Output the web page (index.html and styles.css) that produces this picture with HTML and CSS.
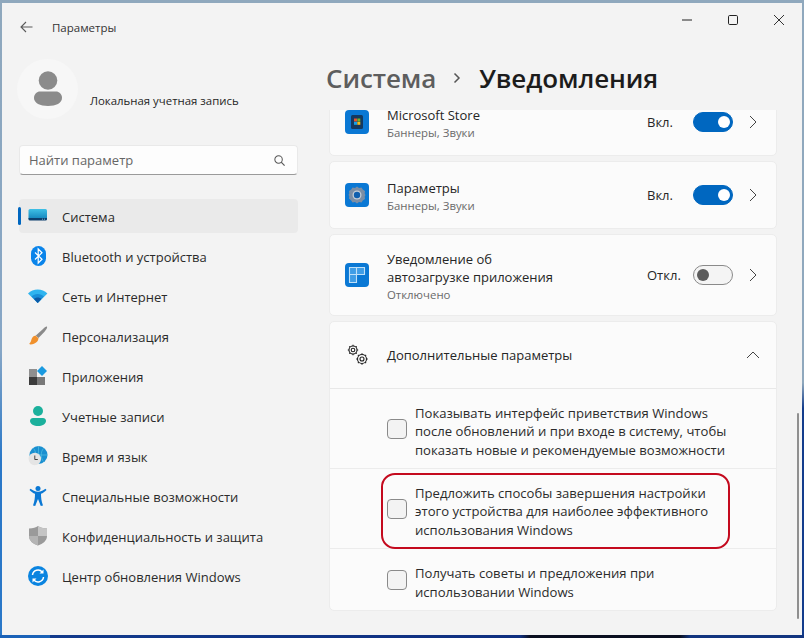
FILE: index.html
```html
<!DOCTYPE html>
<html lang="ru">
<head>
<meta charset="utf-8">
<title>Параметры</title>
<link rel="stylesheet" href="styles.css">
</head>
<body>
<div class="window">
  <header class="titlebar">
    <svg class="back" width="13" height="12" viewBox="0 0 13 12"><path d="M12.500 6H1.200M6 1 1 6l5 5" fill="none" stroke="#5a5a5a" stroke-width="1.100"/></svg>
    <span class="app-title">Параметры</span>
    <div class="controls">
      <svg width="10" height="10" viewBox="0 0 10 10"><path d="M0 5h10" stroke="#222" stroke-width="1"/></svg>
      <svg width="10" height="10" viewBox="0 0 10 10"><rect x=".5" y=".5" width="9" height="9" rx="1.200" fill="none" stroke="#222" stroke-width="1"/></svg>
      <svg width="10" height="10" viewBox="0 0 10 10"><path d="M0 0l10 10M10 0 0 10" stroke="#333" stroke-width="1"/></svg>
    </div>
  </header>
  <div class="columns">
    <aside class="sidebar">
      <div class="account">
        <div class="avatar">
          <svg width="30" height="36" viewBox="0 0 30 36"><circle cx="15" cy="9.500" r="9.300" fill="#8b8b8b"/><path d="M1 27c0-4 3-6.500 6-6.500h16c3 0 6 2.500 6 6.500 0 5-6 8-14 8S1 32 1 27z" fill="#8b8b8b"/></svg>
        </div>
        <span class="account-name">Локальная учетная запись</span>
      </div>
      <div class="search">
        <span class="search-text">Найти параметр</span>
        <svg width="11" height="11" viewBox="0 0 13 13"><circle cx="5.400" cy="5.400" r="4.400" fill="none" stroke="#555" stroke-width="1.200"/><path d="M8.500 8.500 12.500 12.500" stroke="#555" stroke-width="1.400"/></svg>
      </div>
      <nav class="nav">
        <a class="nav-item active">
          <svg class="nav-icon" width="20" height="20" viewBox="0 0 20 20"><defs><linearGradient id="g1" x1="0" y1="0" x2="0" y2="1"><stop offset="0" stop-color="#3fc0e6"/><stop offset="1" stop-color="#0f7fb8"/></linearGradient></defs><rect x=".5" y="3" width="18.500" height="11" rx="1.500" fill="url(#g1)"/><path d="M.5 12h18.500v1a1.500 1.500 0 0 1-1.500 1.500H2A1.500 1.500 0 0 1 .5 13z" fill="#0c3f6e"/><path d="M14 13.200h1M16 13.200h1" stroke="#8fd0ea" stroke-width=".8"/></svg>
          <span>Система</span>
        </a>
        <a class="nav-item">
          <svg class="nav-icon" width="20" height="20" viewBox="0 0 20 20"><rect x="3" y="0" width="15" height="20" rx="7.500" fill="#0a84ea"/><path d="M7 6.500l7 6.800-3.800 3.700V3l3.800 3.700-7 6.800" fill="none" stroke="#fff" stroke-width="1.200"/></svg>
          <span>Bluetooth и устройства</span>
        </a>
        <a class="nav-item">
          <svg class="nav-icon" width="20" height="20" viewBox="0 0 20 20"><path d="M0 7.500C2.500 5 6 3.500 9.700 3.500s7.200 1.500 9.700 4L9.700 17z" fill="#2fb4ef"/><path d="M3.500 10.500C5 9 7.300 8 9.700 8s4.700 1 6.200 2.500L9.700 17z" fill="#1a8fd8"/><path d="M6 13c1-1 2.300-1.500 3.700-1.500s2.700.5 3.700 1.500l-3.700 4z" fill="#0c5aa6"/></svg>
          <span>Сеть и Интернет</span>
        </a>
        <a class="nav-item">
          <svg class="nav-icon" width="20" height="20" viewBox="0 0 20 20"><path d="M19 .5c.5 1-.5 3-2.500 5.200L10.500 12l-2.700-2.500 6.700-6C16.500 1.500 18 .2 19 .5z" fill="#8a8a8a"/><path d="M7.500 9.500l3 2.800c-.3 3-2.500 5.700-8 6.200-1 0-1.500-.5-.9-1.200 1.500-1.300 1.400-2.500 2-4.300.7-2 2.200-3.200 3.900-3.500z" fill="#f0902c"/></svg>
          <span>Персонализация</span>
        </a>
        <a class="nav-item">
          <svg class="nav-icon" width="20" height="20" viewBox="0 0 20 20"><rect x="1" y="3" width="8" height="8" fill="#8f8f8f"/><rect x="1" y="11" width="8" height="8" fill="#3c3c3c"/><rect x="9" y="11" width="8" height="8" fill="#787878"/><path d="M14 0l5 5-5 5-5-5z" fill="#1a9ae0"/></svg>
          <span>Приложения</span>
        </a>
        <a class="nav-item">
          <svg class="nav-icon" width="20" height="20" viewBox="0 0 20 20"><circle cx="10" cy="5" r="5" fill="#1bb09c"/><path d="M2 15c0-2 1.500-3 3-3h10c1.500 0 3 1 3 3 0 3-4 5-8 5s-8-2-8-5z" fill="#1bb09c"/></svg>
          <span>Учетные записи</span>
        </a>
        <a class="nav-item">
          <svg class="nav-icon" width="20" height="20" viewBox="0 0 20 20"><circle cx="10.500" cy="9" r="9" fill="#1a8fd0"/><path d="M1.500 9h18M10.500 0v18M5.500 2.500c3 3 3 10 0 13M15.500 2.500c-3 3-3 10 0 13" fill="none" stroke="#5cc6e4" stroke-width=".6"/><circle cx="6.800" cy="13" r="6.200" fill="#e4e4e4"/><path d="M6.800 9.500V13.500h3" fill="none" stroke="#444" stroke-width="1"/></svg>
          <span>Время и язык</span>
        </a>
        <a class="nav-item">
          <svg class="nav-icon" width="20" height="20" viewBox="0 0 20 20"><circle cx="10" cy="2.500" r="2.500" fill="#0a78d4"/><path d="M1.500 4 2.500 2.700c2 1.500 4.500 3 7.500 3s5.500-1.500 7.500-3L18.500 4c-1.800 1.900-3.500 3.200-5.500 3.700 0 3 .3 7.500 2 11.800l-2.200.5L10 13l-2.800 7-2.200-.5c1.700-4.300 2-8.800 2-11.800C5 7.200 3.300 5.900 1.500 4z" fill="#0a78d4"/></svg>
          <span>Специальные возможности</span>
        </a>
        <a class="nav-item">
          <svg class="nav-icon" width="20" height="20" viewBox="0 0 20 20"><path d="M10 0c2 1.500 5 2.500 9 2.500V10c0 4.500-4 8-9 9.500C5 18 1 14.500 1 10V2.500C5 2.500 8 1.500 10 0z" fill="#9a9a9a"/><path d="M10 0c2 1.500 5 2.500 9 2.500V10H10z" fill="#c4c4c4"/><path d="M10 10H1c0 4.500 4 8 9 9.500z" fill="#b4b4b4"/></svg>
          <span>Конфиденциальность и защита</span>
        </a>
        <a class="nav-item">
          <svg class="nav-icon" width="20" height="20" viewBox="0 0 20 20"><circle cx="10" cy="10" r="10" fill="#0a84e0"/><path d="M4.500 9a5.500 5.500 0 0 1 9.800-2.800M15.500 11a5.500 5.500 0 0 1-9.800 2.800" fill="none" stroke="#fff" stroke-width="1.500"/><path d="M15.500 3.500v4h-4zM4.500 16.500v-4h4z" fill="#fff"/></svg>
          <span>Центр обновления Windows</span>
        </a>
      </nav>
    </aside>
    <main class="main">
      <h1 class="heading">
        <span class="crumb">Система</span>
        <svg class="crumb-sep" width="8" height="12" viewBox="0 0 8 12"><path d="M1.500 1.500 6 6l-4.500 4.500" fill="none" stroke="#555" stroke-width="1.500"/></svg>
        <span>Уведомления</span>
      </h1>
      <div class="scroller">
        <div class="list">
          <section class="card row">
            <svg class="app-icon" width="24" height="24" viewBox="0 0 24 24"><rect width="24" height="24" rx="4" fill="#0a78d4"/><rect x="6" y="5" width="12" height="14" rx="1.500" fill="#14395f"/><rect x="9" y="8.500" width="3" height="3" fill="#e5532d"/><rect x="12.300" y="8.500" width="3" height="3" fill="#6fb52c"/><rect x="9" y="11.800" width="3" height="3" fill="#14a0e8"/><rect x="12.300" y="11.800" width="3" height="3" fill="#f6b91a"/></svg>
            <div class="row-text"><div class="row-title">Microsoft Store</div><div class="row-sub">Баннеры, Звуки</div></div>
            <span class="state">Вкл.</span>
            <span class="toggle on"></span>
            <svg class="chev" width="8" height="14" viewBox="0 0 8 14"><path d="M1 1l6 6-6 6" fill="none" stroke="#444" stroke-width="1"/></svg>
          </section>
          <section class="card row">
            <svg class="app-icon" width="24" height="24" viewBox="0 0 24 24"><rect width="24" height="24" rx="4" fill="#0a78d4"/><path d="M12 3.500l2 1.400 2.500-.5 1.300 2.200 2.200 1.300-.3 2.500.8 1.600-.8 1.600.3 2.500-2.200 1.300-1.300 2.200-2.500-.5-2 1.400-2-1.400-2.500.5-1.300-2.200L4 15.600l.3-2.500-.8-1.100.8-1.600L4 7.900l2.200-1.300 1.300-2.200 2.500.5z" fill="#7b8ea5"/><circle cx="12" cy="12" r="4.500" fill="#c3ccd6"/><circle cx="12" cy="12" r="3.200" fill="#0f5fae"/></svg>
            <div class="row-text"><div class="row-title">Параметры</div><div class="row-sub">Баннеры, Звуки</div></div>
            <span class="state">Вкл.</span>
            <span class="toggle on"></span>
            <svg class="chev" width="8" height="14" viewBox="0 0 8 14"><path d="M1 1l6 6-6 6" fill="none" stroke="#444" stroke-width="1"/></svg>
          </section>
          <section class="card row tall">
            <svg class="app-icon" width="24" height="24" viewBox="0 0 24 24"><rect width="24" height="24" rx="4" fill="#0a78d4"/><path d="M4.500 4.500h7v7h-7zM4.500 11.500h7v8h-7zM11.500 4.500h8v7h-8z" fill="#3f9de6" stroke="#bfe0f8" stroke-width="1.100"/></svg>
            <div class="row-text"><div class="row-title">Уведомление об<br>автозагрузке приложения</div><div class="row-sub">Отключено</div></div>
            <span class="state">Откл.</span>
            <span class="toggle"></span>
            <svg class="chev" width="8" height="14" viewBox="0 0 8 14"><path d="M1 1l6 6-6 6" fill="none" stroke="#444" stroke-width="1"/></svg>
          </section>
          <section class="card">
            <div class="expander-head">
              <svg class="gears" width="22" height="22" viewBox="0 0 22 22"><g fill="none" stroke="#222" stroke-width="1.100"><circle cx="6" cy="6" r="1.800"/><circle cx="6" cy="6" r="4"/><path d="M6 .8v1.200M6 10v1.200M.8 6H2M10 6h1.200M2.300 2.300l.9.900M8.800 8.800l.9.900M9.700 2.300l-.9.900M3.200 8.800l-.9.900"/><circle cx="15" cy="15" r="2"/><circle cx="15" cy="15" r="4.500"/><path d="M15 9.200v1.300M15 19.500v1.300M9.200 15h1.300M19.500 15h1.300M10.900 10.900l.9.900M18.200 18.200l.9.900M19.100 10.900l-.9.900M11.800 18.200l-.9.900"/></g></svg>
              <span class="head-title">Дополнительные параметры</span>
              <svg class="chev-up" width="14" height="8" viewBox="0 0 14 8"><path d="M1 7l6-6 6 6" fill="none" stroke="#444" stroke-width="1"/></svg>
            </div>
            <div class="check-row h80">
              <span class="box"></span>
              <span class="check-text">Показывать интерфейс приветствия Windows<br>после обновлений и при входе в систему, чтобы<br>показать новые и рекомендуемые возможности</span>
            </div>
            <div class="check-row h80 marked">
              <span class="box"></span>
              <span class="check-text">Предложить способы завершения настройки<br>этого устройства для наиболее эффективного<br>использования Windows</span>
              <span class="highlight"></span>
            </div>
            <div class="check-row h62">
              <span class="box"></span>
              <span class="check-text">Получать советы и предложения при<br>использовании Windows</span>
            </div>
          </section>
        </div>
        <div class="scrollbar"></div>
      </div>
    </main>
  </div>
</div>
</body>
</html>
```
FILE: styles.css
```css
* { box-sizing: border-box; }
html, body { height: 100%; }
body {
  margin: 0;
  padding: 3px 2px;
  overflow: hidden;
  background:
    linear-gradient(90deg, #1a62b8 0, #1a62b8 50px, #123a8c 50px, #0f2f80 520px, #0a0f20 530px, #0a0f20 680px, #12357f 690px) bottom / 100% 3px no-repeat,
    linear-gradient(#8fa8bd 0, #8fa8bd 60%, #123c8c 64%) right / 2px 100% no-repeat,
    linear-gradient(#8fa8bd 0%, #86a6c6 55%, #2a78c8 72%, #2a78c8 100%);
  font-family: "Open Sans", "Noto Sans", sans-serif;
  font-size: 13px;
  color: #1f1f1f;
}
.window {
  height: 100%;
  display: flex;
  flex-direction: column;
  background: #f3f3f3;
}
.titlebar {
  height: 46px;
  flex: none;
  display: flex;
  align-items: center;
  padding: 3px 18px 0 18px;
}
.back { margin: -2px 19px 0 0; }
.app-title { font-size: 11.500px; color: #333; }
.controls {
  margin-left: auto;
  display: flex;
  gap: 36px;
  margin-top: -16px;
}
.columns { flex: 1; min-height: 0; display: flex; }
.sidebar { width: 316px; flex: none; padding: 10px 0 0 15px; }
.account { display: flex; align-items: center; gap: 12px; }
.avatar {
  width: 61px;
  height: 60px;
  border-radius: 50%;
  background: #f7f7f7;
  display: flex;
  align-items: center;
  justify-content: center;
}
.account-name { font-size: 11.400px; color: #1f1f1f; margin-top: 22px; }
.search {
  width: 279px;
  height: 30px;
  margin: 26px 0 0 2px;
  padding: 0 12px 0 9px;
  display: flex;
  align-items: center;
  justify-content: space-between;
  background: #fdfdfd;
  border: 1px solid #e9e9e9;
  border-bottom-color: #9a9a9a;
  border-radius: 4px;
}
.search-text { font-size: 13px; color: #666; margin-top: -1px; }
.nav { margin: 24px 0 0 2px; width: 279px; display: flex; flex-direction: column; gap: 6px; }
.nav-item {
  position: relative;
  height: 34px;
  display: flex;
  align-items: center;
  padding-left: 9px;
  gap: 14px;
  border-radius: 4px;
  font-size: 13px;
  color: #2b2b2b;
}
.nav-item span { margin-top: 2px; }
.nav-icon { flex: none; }
.active { background: #eaeaea; }
.active::before {
  content: "";
  position: absolute;
  left: -1px;
  top: 8px;
  width: 3px;
  height: 18px;
  border-radius: 2px;
  background: #0067c0;
}
.main { flex: 1; min-width: 0; display: flex; flex-direction: column; }
.heading {
  flex: none;
  height: 61px;
  margin: 0;
  padding: 0 0 3px 8px;
  display: flex;
  align-items: center;
  font-size: 26px;
  font-weight: 600;
  letter-spacing: -0.1px;
  color: #1c1c1c;
}
.crumb { color: #5d5d5d; }
.crumb-sep { margin: 0 18px 0 17px; }
.scroller { position: relative; flex: 1; min-height: 0; overflow: hidden; }
.list {
  width: 448px;
  margin: -22px 0 0 11px;
  display: flex;
  flex-direction: column;
  gap: 5px;
}
.card {
  background: #fbfbfb;
  border: 1px solid #ececec;
  border-radius: 5px;
}
.row {
  height: 68px;
  display: flex;
  align-items: center;
  padding: 0 19px 0 15px;
}
.tall { height: 82px; }
.app-icon { flex: none; margin-right: 18px; }
.row-text { flex: 1; min-width: 0; padding-top: 4px; }
.row-title { font-size: 13px; line-height: 18px; color: #262626; }
.row-sub { font-size: 11.400px; line-height: 18px; color: #6a6a6a; }
.state { width: 46px; font-size: 13px; color: #262626; }
.toggle {
  position: relative;
  width: 40px;
  height: 20px;
  margin-right: 16px;
  border-radius: 10px;
  border: 1px solid #8a8a8a;
  background: #f4f4f4;
  flex: none;
}
.toggle::after {
  content: "";
  position: absolute;
  top: 3px;
  left: 3px;
  width: 12px;
  height: 12px;
  border-radius: 50%;
  background: #5c5c5c;
}
.toggle.on { background: #0067c0; border-color: #0067c0; }
.toggle.on::after { left: 24px; background: #fff; }
.chev { flex: none; }
.expander-head {
  height: 67px;
  display: flex;
  align-items: center;
  padding: 0 16px 1px 17px;
  border-bottom: 1px solid #e8e8e8;
}
.gears { flex: none; margin-right: 18px; }
.head-title { flex: 1; font-size: 13px; color: #262626; }
.check-row {
  position: relative;
  display: flex;
  align-items: center;
  padding-left: 57px;
  gap: 8px;
  font-size: 13.100px;
  line-height: 18.500px;
  color: #2b2b2b;
}
.check-text { padding-top: 6px; }
.h80 { height: 80px; border-bottom: 1px solid #ececec; }
.h62 { height: 61px; }
.box {
  flex: none;
  width: 20px;
  height: 20px;
  border: 1px solid #8a8a8a;
  border-radius: 4px;
  background: #f3f3f3;
}
.highlight {
  position: absolute;
  left: 51px;
  top: 4px;
  width: 349px;
  height: 76px;
  border: 2.500px solid #c40a1e;
  border-radius: 14px;
}
.scrollbar {
  position: absolute;
  right: 3px;
  top: 303px;
  width: 2px;
  height: 206px;
  border-radius: 1px;
  background: #8f8f8f;
}
```
